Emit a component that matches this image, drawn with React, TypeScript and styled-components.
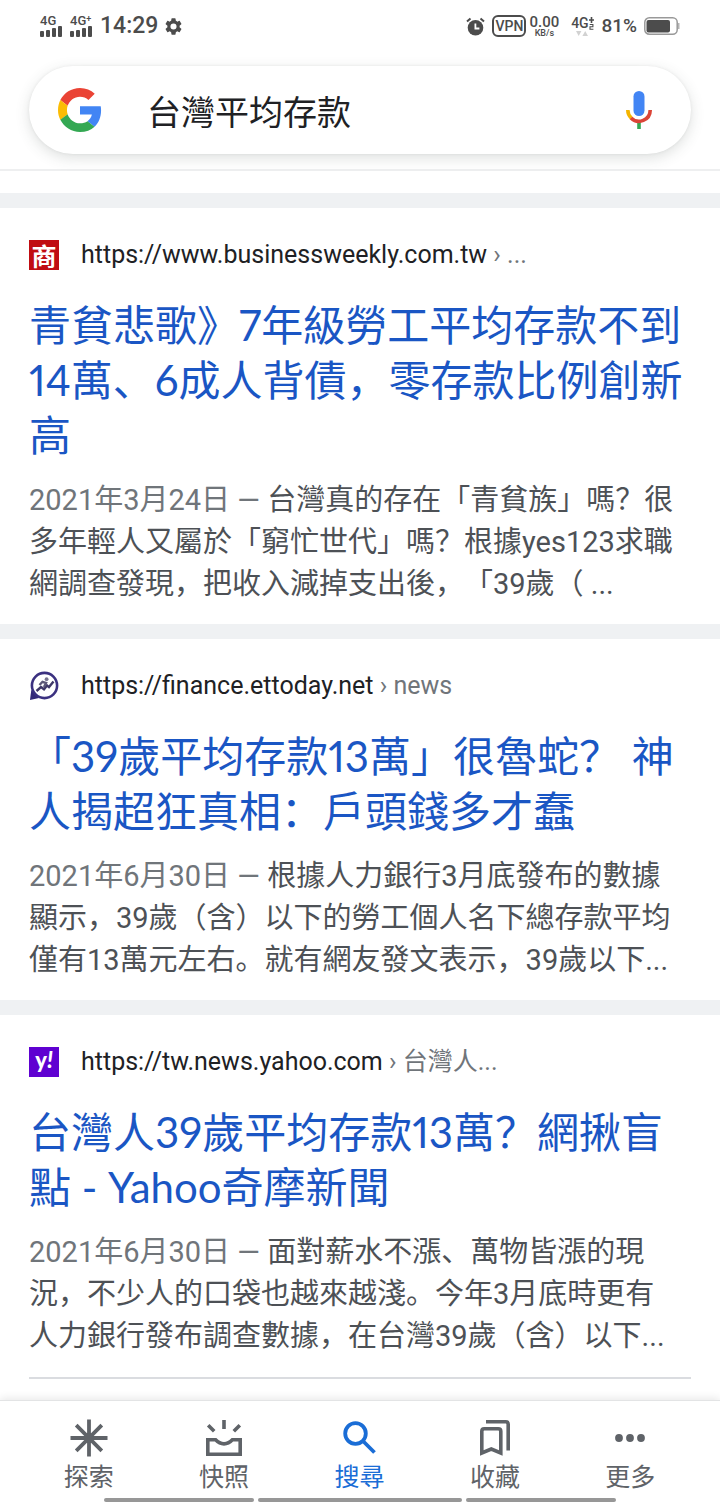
import React from "react";
import styled, { createGlobalStyle } from "styled-components";

const sans = `Roboto, "Noto Sans CJK SC", sans-serif`;
const display = `Lato, "Noto Sans CJK SC", sans-serif`;

const GlobalStyle = createGlobalStyle`
  *, *::before, *::after { box-sizing: border-box; }
  body { margin: 0; background: #fff; font-family: ${sans}; color: #202124; text-spacing-trim: space-all; }
  svg { display: block; flex: none; }
`;

const Page = styled.div`
  display: flex;
  flex-direction: column;
  min-height: 100vh;
`;

/* ---------- status bar ---------- */

const StatusBar = styled.div`
  display: flex;
  justify-content: space-between;
  align-items: center;
  height: 52px;
  padding: 0 40px;
  color: #4c4c4c;
  font-weight: 500;
`;

const StatusGroup = styled.div`
  display: flex;
  align-items: center;
  gap: 7px;
`;

const Signal = styled.div`
  display: flex;
  flex-direction: column;
  width: 23px;
  font-size: 13px;
  line-height: 11px;
  white-space: nowrap;
`;

const Plus = styled.span`
  font-size: 9px;
  vertical-align: 3px;
  line-height: 1px;
`;

const Clock = styled.time`
  font-size: 23px;
  line-height: 30px;
`;

const Vpn = styled.span`
  display: grid;
  place-items: center;
  width: 34px;
  height: 22px;
  border: 2px solid #4c4c4c;
  border-radius: 6px;
  font-size: 14px;
  line-height: 18px;
`;

const Speed = styled.span`
  display: flex;
  flex-direction: column;
  align-items: center;
  width: 30px;
  margin-left: -4px;
  font-size: 15px;
  line-height: 14px;
`;

const SpeedUnit = styled.span`
  font-size: 9px;
  line-height: 8px;
`;

const Data = styled.span`
  display: flex;
  flex-direction: column;
  align-items: center;
  width: 24px;
  margin-left: 4px;
  font-size: 14px;
  line-height: 15px;
  white-space: nowrap;
`;

const DataRow = styled.span`
  display: flex;
  align-items: center;
`;

const Percent = styled.span`
  font-size: 19px;
  line-height: 24px;
`;

/* ---------- search header ---------- */

const Header = styled.header`
  padding: 14px 29px 15px;
  border-bottom: 2px solid #eeeff0;
`;

const SearchBox = styled.form`
  display: flex;
  align-items: center;
  height: 88px;
  padding: 0 29px;
  border-radius: 44px;
  background: #fff;
  box-shadow: 0 4px 14px rgba(60, 72, 68, 0.17), 0 0 3px rgba(60, 64, 67, 0.08);
`;

const Query = styled.input`
  flex: 1;
  min-width: 0;
  height: 54px;
  margin: 0 20px 0 45px;
  padding: 1px 0 0;
  border: 0;
  outline: 0;
  background: none;
  color: #202124;
  font-family: ${sans};
  font-size: 34px;
  line-height: 48px;
`;

const MicButton = styled.button`
  display: grid;
  place-items: center;
  width: 46px;
  height: 46px;
  padding: 0;
  border: 0;
  background: none;
`;

/* ---------- results ---------- */

const Results = styled.main`
  flex: 1;
  padding-top: 22px;
`;

const Result = styled.article`
  padding: 27px 29px 19px;
  border-top: 15px solid #eff1f3;
`;

const Source = styled.a`
  display: flex;
  align-items: center;
  gap: 22px;
  height: 40px;
  margin-bottom: 23px;
  color: #202124;
  text-decoration: none;
  font-size: 25px;
  line-height: 40px;
  white-space: nowrap;
`;

const Crumb = styled.span`
  color: #70757a;
`;

const Badge = styled.span<{ $bg: string; $latin?: boolean }>`
  display: flex;
  justify-content: center;
  flex: none;
  width: 30px;
  height: 30px;
  background: ${(p) => p.$bg};
  color: #fff;
  font-family: ${(p) => (p.$latin ? "Lato" : '"Noto Sans CJK SC"')}, sans-serif;
  font-weight: ${(p) => (p.$latin ? 900 : 700)};
  font-size: ${(p) => (p.$latin ? 22 : 25)}px;
  line-height: ${(p) => (p.$latin ? 26 : 30)}px;
`;

const Title = styled.h3`
  margin: 0 0 16px;
  font-family: ${display};
  font-variant-numeric: proportional-nums;
  font-weight: 400;
  font-size: 42px;
  line-height: 55px;
`;

const TitleLink = styled.a`
  color: #1a56c4;
  text-decoration: none;
`;

const Snippet = styled.p`
  margin: 0;
  color: #4d5156;
  font-size: 29px;
  line-height: 42px;
`;

const Line = styled.span`
  display: block;
  white-space: nowrap;
`;

const DateText = styled.span`
  color: #70757a;
`;

const Divider = styled.hr`
  height: 2px;
  margin: 1px 29px 21px;
  border: 0;
  background: #dadce0;
`;

/* ---------- bottom navigation ---------- */

const BottomBar = styled.footer`
  position: sticky;
  bottom: 0;
  background: #fff;
  border-top: 1px solid #e3e4e5;
  box-shadow: 0 -2px 8px rgba(0, 0, 0, 0.09);
`;

const Nav = styled.nav`
  display: grid;
  grid-template-columns: repeat(5, 1fr);
  padding: 18px 22px 0 21px;
`;

const Tab = styled.button<{ $active?: boolean }>`
  display: flex;
  flex-direction: column;
  align-items: center;
  gap: 5px;
  height: 78px;
  padding: 0;
  border: 0;
  background: none;
  color: ${(p) => (p.$active ? "#1a6dd6" : "#5f6368")};
  font-family: ${sans};
  font-size: 25px;
  line-height: 32px;
`;

const Gestures = styled.div`
  display: grid;
  grid-template-columns: 150fr 206fr 150fr;
  gap: 4px;
  width: 71%;
  margin: 1px auto 2px;
`;

const GestureBar = styled.span`
  height: 4px;
  border-radius: 2px;
  background: #979797;
`;

/* ---------- icons ---------- */

const Bars = () => (
  <svg width="22" height="11" viewBox="0 0 22 11" fill="#4c4c4c">
    <rect x="0" y="5" width="4" height="6" rx="1" />
    <rect x="6" y="4" width="4" height="7" rx="1" />
    <rect x="12" y="2" width="4" height="9" rx="1" />
    <rect x="18" y="0" width="4" height="11" rx="1" />
  </svg>
);

const Gear = () => (
  <svg width="17" height="17" viewBox="2 2 20 20" fill="#4c4c4c">
    <path d="M19.14 12.94c.04-.3.06-.61.06-.94 0-.32-.02-.64-.07-.94l2.03-1.58a.49.49 0 0 0 .12-.61l-1.92-3.32a.49.49 0 0 0-.59-.22l-2.39.96a7 7 0 0 0-1.62-.94l-.36-2.54a.48.48 0 0 0-.48-.41h-3.84a.47.47 0 0 0-.47.41l-.36 2.54c-.59.24-1.13.57-1.62.94l-2.39-.96a.48.48 0 0 0-.59.22L2.74 8.87a.47.47 0 0 0 .12.61l2.03 1.58c-.05.3-.09.63-.09.94s.02.64.07.94l-2.03 1.58a.49.49 0 0 0-.12.61l1.92 3.32c.12.22.37.29.59.22l2.39-.96c.5.38 1.03.7 1.62.94l.36 2.54c.05.24.24.41.48.41h3.84c.24 0 .44-.17.47-.41l.36-2.54c.59-.24 1.13-.56 1.62-.94l2.39.96c.22.08.47 0 .59-.22l1.92-3.32a.47.47 0 0 0-.12-.61zM12 15.6a3.6 3.6 0 1 1 0-7.2 3.6 3.6 0 0 1 0 7.2z" />
  </svg>
);

const Alarm = () => (
  <svg width="19" height="19" viewBox="0 0 19 19">
    <circle cx="9.5" cy="10.8" r="7.8" fill="#4c4c4c" />
    <path d="M1 4.5 4.5 1.4M18 4.5 14.5 1.4" stroke="#4c4c4c" strokeWidth="2" />
    <path d="M9.4 6.5v5h4" fill="none" stroke="#fff" strokeWidth="1.8" />
  </svg>
);

const DataMarks = () => (
  <svg width="5" height="13" viewBox="0 0 5 13" fill="none" stroke="#4c4c4c">
    <path d="M0 3h5M2.5 0v6" strokeWidth="1.6" />
    <path d="M.7 7.5h3.2v2.3H1v2.5h3.4" strokeWidth="1.1" />
  </svg>
);

const DataArrows = () => (
  <svg width="12" height="5" viewBox="0 0 12 5" fill="#d2d2d2">
    <path d="M0 0h5.4L2.7 5zM6.4 5H12L9.2 0z" />
  </svg>
);

const Battery = () => (
  <svg width="36" height="18" viewBox="0 0 36 18">
    <rect x=".8" y=".8" width="32.4" height="16.4" rx="4.5" fill="#fff" stroke="#999" strokeWidth="1.5" />
    <rect x="2.5" y="3" width="23.5" height="12.5" rx="2" fill="#4c4c4c" />
    <path d="M34 6h1.5v6H34z" fill="#b5b5b5" />
  </svg>
);

const GoogleLogo = () => (
  <svg width="44" height="44" viewBox="0 0 48 48" aria-label="Google">
    <path fill="#EA4335" d="M24 9.5c3.54 0 6.71 1.22 9.21 3.6l6.85-6.85C35.9 2.38 30.47 0 24 0 14.62 0 6.51 5.38 2.56 13.22l7.98 6.19C12.43 13.72 17.74 9.5 24 9.5z" />
    <path fill="#4285F4" d="M46.98 24.55c0-1.57-.15-3.09-.38-4.55H24v9.02h12.94c-.58 2.96-2.26 5.48-4.78 7.18l7.73 6c4.51-4.18 7.09-10.36 7.09-17.65z" />
    <path fill="#FBBC05" d="M10.53 28.59c-.48-1.45-.76-2.99-.76-4.59s.27-3.14.76-4.59l-7.98-6.19C.92 16.46 0 20.12 0 24c0 3.88.92 7.54 2.56 10.78l7.97-6.19z" />
    <path fill="#34A853" d="M24 48c6.48 0 11.93-2.13 15.89-5.81l-7.73-6c-2.15 1.45-4.92 2.3-8.16 2.3-6.26 0-11.57-4.22-13.47-9.91l-7.98 6.19C6.51 42.62 14.62 48 24 48z" />
  </svg>
);

const Mic = () => (
  <svg width="26" height="38" viewBox="0 0 26 38">
    <rect x="7.5" y="0" width="11" height="25" rx="5.5" fill="#4285f4" />
    <path d="M11.2 31h3.6v7h-3.6z" fill="#34a853" />
    <path d="M1.8 19a11.2 11.2 0 0 0 3.5 8.1" fill="none" stroke="#f4b400" strokeWidth="3.6" />
    <path d="M5 26.9a11.2 11.2 0 0 0 19.2-7.9" fill="none" stroke="#db4437" strokeWidth="3.6" />
  </svg>
);

const EttodayIcon = () => (
  <svg width="30" height="30" viewBox="0 0 30 30" fill="none">
    <path d="M2.3 19 1 29l9-2z" fill="#342a78" />
    <circle cx="15.5" cy="14.5" r="12.6" fill="#fff" stroke="#3b3180" strokeWidth="2.6" />
    <path d="m7.5 20 4.5-4 3 2.3 3-3.8 2 1.6 4.5-5.6" stroke="#3f3868" strokeWidth="2.4" />
    <path d="m10.5 14 3-3.2 3.6 1.2-2.2 4" stroke="#5c5878" strokeWidth="2.4" />
    <circle cx="17.6" cy="8.2" r="1.9" fill="#77738f" />
  </svg>
);

const Spark = () => (
  <svg width="38" height="38" viewBox="0 0 38 38" stroke="#5f6368" strokeWidth="3.8">
    <path d="M19 .5v37M.5 19h37M6.2 6.2l25.6 25.6M31.8 6.2 6.2 31.8" />
  </svg>
);

const Snapshot = () => (
  <svg width="38" height="38" viewBox="0 0 38 38" fill="none" stroke="#5f6368" strokeWidth="3.6">
    <path d="M19 1v9M3.2 6.2l6 6M34.8 6.2l-6 6" />
    <path d="M2.8 20.8h7.8c5 5.4 11.8 5.4 16.8 0h7.8v14.4H2.8z" />
  </svg>
);

const SearchIcon = () => (
  <svg width="38" height="38" viewBox="0 0 38 38" fill="none" stroke="#1a6dd6" strokeWidth="3.8">
    <circle cx="15.5" cy="14.5" r="10.3" />
    <path d="m22.5 21.5 12 12" />
  </svg>
);

const Bookmarks = () => (
  <svg width="38" height="38" viewBox="0 0 38 38" fill="none" stroke="#5f6368" strokeWidth="3.6">
    <path d="M5.8 34V12.3q0-2.5 2.5-2.5h14q2.5 0 2.5 2.5V34l-9.5-4z" />
    <path d="M10 2.8h19.7q2.5 0 2.5 2.5V31.5" />
  </svg>
);

const More = () => (
  <svg width="38" height="38" viewBox="0 0 38 38" fill="#5f6368">
    <circle cx="8" cy="19" r="3.9" />
    <circle cx="19" cy="19" r="3.9" />
    <circle cx="30" cy="19" r="3.9" />
  </svg>
);

/* ---------- data ---------- */

const results = [
  {
    icon: <Badge $bg="#c00d12">商</Badge>,
    site: "https://www.businessweekly.com.tw",
    crumb: "...",
    title: ["青貧悲歌》7年級勞工平均存款不到", "14萬、6成人背債，零存款比例創新", "高"],
    date: "2021年3月24日",
    text: ["台灣真的存在「青貧族」嗎？很", "多年輕人又屬於「窮忙世代」嗎？根據yes123求職", "網調查發現，把收入減掉支出後，「39歲（ ..."],
  },
  {
    icon: <EttodayIcon />,
    site: "https://finance.ettoday.net",
    crumb: "news",
    title: ["「39歲平均存款13萬」很魯蛇？ 神", "人揭超狂真相：戶頭錢多才蠢"],
    date: "2021年6月30日",
    text: ["根據人力銀行3月底發布的數據", "顯示，39歲（含）以下的勞工個人名下總存款平均", "僅有13萬元左右。就有網友發文表示，39歲以下..."],
  },
  {
    icon: (
      <Badge $bg="#5f01d1" $latin>
        y<i>!</i>
      </Badge>
    ),
    site: "https://tw.news.yahoo.com",
    crumb: "台灣人...",
    title: ["台灣人39歲平均存款13萬？網揪盲", "點 - Yahoo奇摩新聞"],
    date: "2021年6月30日",
    text: ["面對薪水不漲、萬物皆漲的現", "況，不少人的口袋也越來越淺。今年3月底時更有", "人力銀行發布調查數據，在台灣39歲（含）以下..."],
  },
];

const tabs = [
  { label: "探索", icon: <Spark /> },
  { label: "快照", icon: <Snapshot /> },
  { label: "搜尋", icon: <SearchIcon />, active: true },
  { label: "收藏", icon: <Bookmarks /> },
  { label: "更多", icon: <More /> },
];

export default function App() {
  return (
    <Page lang="zh-Hans">
      <GlobalStyle />
      <StatusBar>
        <StatusGroup>
          <Signal>
            <span>4G</span>
            <Bars />
          </Signal>
          <Signal>
            <span>
              4G<Plus>+</Plus>
            </span>
            <Bars />
          </Signal>
          <Clock>14:29</Clock>
          <Gear />
        </StatusGroup>
        <StatusGroup>
          <Alarm />
          <Vpn>VPN</Vpn>
          <Speed>
            0.00
            <SpeedUnit>KB/s</SpeedUnit>
          </Speed>
          <Data>
            <DataRow>
              4G
              <DataMarks />
            </DataRow>
            <DataArrows />
          </Data>
          <Percent>81%</Percent>
          <Battery />
        </StatusGroup>
      </StatusBar>

      <Header>
        <SearchBox role="search" onSubmit={(e) => e.preventDefault()}>
          <GoogleLogo />
          <Query type="text" aria-label="搜尋" defaultValue="台灣平均存款" />
          <MicButton type="button" aria-label="語音搜尋">
            <Mic />
          </MicButton>
        </SearchBox>
      </Header>

      <Results>
        {results.map((r) => (
          <Result key={r.site}>
            <Source href={r.site}>
              {r.icon}
              <span>
                {r.site}
                <Crumb> › {r.crumb}</Crumb>
              </span>
            </Source>
            <Title>
              <TitleLink href={r.site}>
                {r.title.map((t) => (
                  <Line key={t}>{t}</Line>
                ))}
              </TitleLink>
            </Title>
            <Snippet>
              {r.text.map((t, i) => (
                <Line key={t}>
                  {i === 0 && <DateText>{r.date} — </DateText>}
                  {t}
                </Line>
              ))}
            </Snippet>
          </Result>
        ))}
        <Divider />
      </Results>

      <BottomBar>
        <Nav>
          {tabs.map((t) => (
            <Tab key={t.label} type="button" $active={t.active} aria-current={t.active ? "page" : undefined}>
              {t.icon}
              {t.label}
            </Tab>
          ))}
        </Nav>
        <Gestures>
          <GestureBar />
          <GestureBar />
          <GestureBar />
        </Gestures>
      </BottomBar>
    </Page>
  );
}
